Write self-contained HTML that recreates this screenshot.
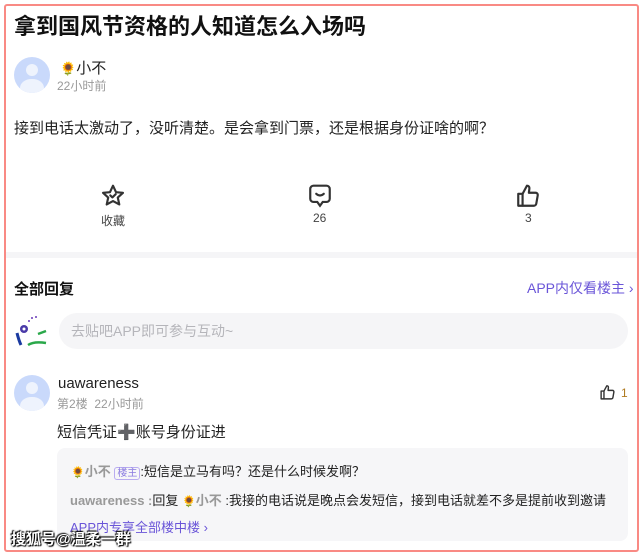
<!DOCTYPE html>
<html><head><meta charset="utf-8"><style>
*{margin:0;padding:0;box-sizing:border-box}
body{width:641px;height:555px;background:#fff;position:relative;overflow:hidden;font-family:"Liberation Sans","Noto Sans CJK SC",sans-serif;color:#141414}
.a{position:absolute;white-space:nowrap}
.frame{position:absolute;left:4px;top:4px;width:635px;height:548px;border:2px solid #f98a84;border-radius:3px}
.av{position:absolute;border-radius:50%;background:#c9d9fb;overflow:hidden}
.av:before{content:"";position:absolute;left:33%;top:20%;width:34%;height:34%;border-radius:50%;background:#eef3fd}
.av:after{content:"";position:absolute;left:18%;top:60%;width:64%;height:50%;border-radius:50%;background:#eef3fd}
.sf{font-size:13px}
</style></head><body>
<div class="a" style="left:6px;top:252px;width:631px;height:6px;background:#f5f5f7"></div>
<div class="a" style="left:14px;top:9px;font-size:22px;font-weight:bold;color:#111">拿到国风节资格的人知道怎么入场吗</div>
<div class="av" style="left:14px;top:57px;width:36px;height:36px"></div>
<div class="a" style="left:60px;top:57px;font-size:15px;color:#222"><span class="sf">🌻</span>小不</div>
<div class="a" style="left:57px;top:77px;font-size:12px;color:#999">22小时前</div>
<div class="a" style="left:14px;top:117px;font-size:15px;color:#222">接到电话太激动了，没听清楚。是会拿到门票，还是根据身份证啥的啊？</div>
<svg class="a" style="left:100px;top:183px" width="26" height="26" viewBox="0 0 24 24" fill="none" stroke="#333" stroke-width="2" stroke-linejoin="round"><path d="M12 2.5l2.8 6 6.4.6-4.8 4.3 1.4 6.4L12 16.7 6.2 19.8l1.4-6.4L2.8 9.1l6.4-.6z"/><path d="M9.5 11.5l2 1.8 3-3" stroke-linecap="round"/></svg>
<div class="a" style="left:101px;top:212px;font-size:12px;color:#444">收藏</div>
<svg class="a" style="left:307px;top:183px" width="26" height="26" viewBox="0 0 24 24" fill="none" stroke="#333" stroke-width="2"><path d="M6 2.5h12a3 3 0 0 1 3 3v9a3 3 0 0 1-3 3h-3.5L12 21l-2.5-3.5H6a3 3 0 0 1-3-3v-9a3 3 0 0 1 3-3z"/><path d="M8.5 10q3.5 3 7 0" stroke-linecap="round"/></svg>
<div class="a" style="left:313px;top:211px;font-size:12px;color:#444">26</div>
<svg class="a" style="left:515px;top:183px" width="26" height="26" viewBox="0 0 24 24" fill="none" stroke="#333" stroke-width="2" stroke-linejoin="round"><path d="M3 10h4v11H3z"/><path d="M7 10l4-7.5c1.5 0 2.5 1 2.3 2.6L12.8 9H19a2 2 0 0 1 2 2.3l-1.3 7.5A2.5 2.5 0 0 1 17.2 21H7"/></svg>
<div class="a" style="left:525px;top:211px;font-size:12px;color:#444">3</div>
<div class="a" style="left:14px;top:278px;font-size:15px;font-weight:bold;color:#111">全部回复</div>
<div class="a" style="left:527px;top:278px;font-size:14px;color:#6a55d8">APP内仅看楼主 ›</div>
<div class="a" style="left:14px;top:313px;width:36px;height:36px">
<svg width="36" height="36" viewBox="0 0 36 36"><circle cx="10" cy="16" r="4" fill="#4a3aa8"/><circle cx="10" cy="16" r="1.5" fill="#fff"/><path d="M3 20q2 8 4 12" stroke="#1a3aa0" stroke-width="3" fill="none"/><path d="M24 21l8-3M14 32q6-4 18-2" stroke="#2aa84a" stroke-width="2.5" fill="none"/><circle cx="18" cy="5" r="1" fill="#6a3ab8"/><circle cx="22" cy="4" r="1" fill="#6a3ab8"/><circle cx="15" cy="8" r="1" fill="#6a3ab8"/></svg></div>
<div class="a" style="left:59px;top:313px;width:569px;height:36px;border-radius:18px;background:#f5f5f7;padding:8px 12px;font-size:14px;color:#b5b5ba">去贴吧APP即可参与互动~</div>
<div class="av" style="left:14px;top:375px;width:36px;height:36px"></div>
<div class="a" style="left:58px;top:375px;font-size:15px;color:#222">uawareness</div>
<div class="a" style="left:57px;top:395px;font-size:12px;color:#999">第2楼 &nbsp;22小时前</div>
<svg class="a" style="left:599px;top:384px" width="17" height="17" viewBox="0 0 24 24" fill="none" stroke="#333" stroke-width="2" stroke-linejoin="round"><path d="M3 10h4v11H3z"/><path d="M7 10l4-7.5c1.5 0 2.5 1 2.3 2.6L12.8 9H19a2 2 0 0 1 2 2.3l-1.3 7.5A2.5 2.5 0 0 1 17.2 21H7"/></svg>
<div class="a" style="left:621px;top:386px;font-size:12px;color:#b07a20">1</div>
<div class="a" style="left:57px;top:421px;font-size:15px;color:#222">短信凭证<span style="color:#6a4c9c;font-weight:bold">➕</span>账号身份证进</div>
<div class="a" style="left:57px;top:448px;width:571px;height:93px;border-radius:8px;background:#f6f6f8"></div>
<div class="a" style="left:71px;top:461px;font-size:13px;color:#222"><span style="font-size:11px">🌻</span><b style="color:#999">小不</b> <span style="font-size:10px;color:#8a7ae0;border:1px solid #b9acf0;border-radius:3px;padding:0 2px">楼主</span>:短信是立马有吗？还是什么时候发啊？</div>
<div class="a" style="left:70px;top:490px;font-size:13px;color:#222"><b style="color:#999">uawareness :</b>回复 <span style="font-size:11px">🌻</span><b style="color:#999">小不</b> :我接的电话说是晚点会发短信，接到电话就差不多是提前收到邀请</div>
<div class="a" style="left:70px;top:517px;font-size:13px;color:#6a55d8">APP内专享全部楼中楼 ›</div>
<div class="a" style="left:11px;top:528px;font-size:15px;font-weight:bold;color:#fff;text-shadow:0 0 2px #000,1px 1px 1px #000,-1px -1px 1px #000">搜狐号@温柔一群</div>
<div class="frame"></div>
</body></html>
